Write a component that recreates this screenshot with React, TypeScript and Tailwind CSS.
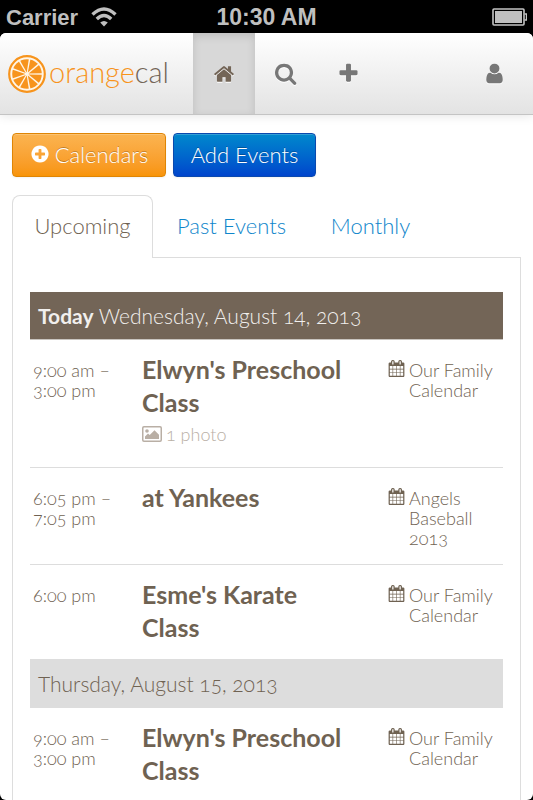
import type { ReactNode } from "react";

const PATHS = {
  home: "M1472 992v480q0 26-19 45t-45 19h-384v-384h-256v384h-384q-26 0-45-19t-19-45v-480q0-1 .5-3t.5-3l575-474 575 474q1 2 1 6zm223-69l-62 74q-8 9-21 11h-3q-13 0-21-7l-692-577-692 577q-12 8-24 7-13-2-21-11l-62-74q-8-10-7-23.5t11-21.5l719-599q32-26 76-26t76 26l244 204v-195q0-14 9-23t23-9h192q14 0 23 9t9 23v408l219 182q10 8 11 21.5t-7 23.5z",
  search: "M1152 832q0-185-131.5-316.5t-316.5-131.5-316.5 131.5-131.5 316.5 131.5 316.5 316.5 131.5 316.5-131.5 131.5-316.5zm512 832q0 52-38 90t-90 38q-54 0-90-38l-343-342q-179 124-399 124-143 0-273.5-55.5t-225-150-150-225-55.5-273.5 55.5-273.5 150-225 225-150 273.5-55.5 273.5 55.5 225 150 150 225 55.5 273.5q0 220-124 399l343 343q37 37 37 90z",
  plus: "M1600 736v192q0 40-28 68t-68 28h-416v416q0 40-28 68t-68 28h-192q-40 0-68-28t-28-68v-416h-416q-40 0-68-28t-28-68v-192q0-40 28-68t68-28h416v-416q0-40 28-68t68-28h192q40 0 68 28t28 68v416h416q40 0 68 28t28 68z",
  plusCircle: "M1344 960v-128q0-26-19-45t-45-19h-256v-256q0-26-19-45t-45-19h-128q-26 0-45 19t-19 45v256h-256q-26 0-45 19t-19 45v128q0 26 19 45t45 19h256v256q0 26 19 45t45 19h128q26 0 45-19t19-45v-256h256q26 0 45-19t19-45zm320-64q0 209-103 385.5t-279.5 279.5-385.5 103-385.5-103-279.5-279.5-103-385.5 103-385.5 279.5-279.5 385.5-103 385.5 103 279.5 279.5 103 385.5z",
  user: "M1536 1399q0 109-62.5 187t-150.5 78h-854q-88 0-150.5-78t-62.5-187q0-85 8.5-160.5t31.5-152 58.5-131 94-89 134.5-34.5q131 128 313 128t313-128q76 0 134.5 34.5t94 89 58.5 131 31.5 152 8.5 160.5zm-256-887q0 159-112.5 271.5t-271.5 112.5-271.5-112.5-112.5-271.5 112.5-271.5 271.5-112.5 271.5 112.5 112.5 271.5z",
  calendar: "M192 1664h288v-288h-288v288zm352 0h320v-288h-320v288zm-352-352h288v-320h-288v320zm352 0h320v-320h-320v320zm-352-384h288v-288h-288v288zm736 736h320v-288h-320v288zm-384-736h320v-288h-320v288zm768 736h288v-288h-288v288zm-384-352h320v-320h-320v320zm-352-864v-288q0-13-9.5-22.5t-22.5-9.5h-64q-13 0-22.5 9.5t-9.5 22.5v288q0 13 9.5 22.5t22.5 9.5h64q13 0 22.5-9.5t9.5-22.5zm736 864h288v-320h-288v320zm-384-384h320v-288h-320v288zm384 0h288v-288h-288v288zm32-480v-288q0-13-9.5-22.5t-22.5-9.5h-64q-13 0-22.5 9.5t-9.5 22.5v288q0 13 9.5 22.5t22.5 9.5h64q13 0 22.5-9.5t9.5-22.5zm384-64v1280q0 52-38 90t-90 38h-1408q-52 0-90-38t-38-90v-1280q0-52 38-90t90-38h128v-96q0-66 47-113t113-47h64q66 0 113 47t47 113v96h384v-96q0-66 47-113t113-47h64q66 0 113 47t47 113v96h128q52 0 90 38t38 90z",
};

function Icon({ name, className }: { name: keyof typeof PATHS; className: string }) {
  return (
    <svg viewBox="0 0 1792 1792" className={className} fill="currentColor" overflow="visible" aria-hidden="true">
      <path d={PATHS[name]} />
    </svg>
  );
}

function PhotoIcon() {
  return (
    <svg viewBox="0 0 20 16" className="h-4 w-5" aria-hidden="true">
      <rect x="0.75" y="0.75" width="18.5" height="14.5" rx="1.2" fill="none" stroke="currentColor" strokeWidth="1.5" />
      <circle cx="5" cy="5" r="1.8" fill="currentColor" />
      <path d="M3 13v-2.6l3-3 1.7 1.7L12.500 4.300 17 8.800V13z" fill="currentColor" />
    </svg>
  );
}

function OrangeSlice() {
  const spokes = Array.from({ length: 9 }, (_, i) => i * 40 + 10);
  return (
    <svg viewBox="0 0 38 38" className="size-[38px]" aria-hidden="true">
      <circle cx="19" cy="19" r="17.800" fill="#fff6e8" stroke="#f7941d" strokeWidth="2.2" />
      <circle cx="19" cy="19" r="14.800" fill="#f7941d" />
      {spokes.map((angle) => (
        <path key={angle} d="M18.500 19 L18.200 3.500 H19.800 L19.500 19Z" fill="#fff6e8" transform={`rotate(${angle} 19 19)`} />
      ))}
      <circle cx="19" cy="19" r="1.800" fill="#fff6e8" />
    </svg>
  );
}

function StatusBar() {
  return (
    <div className="grid h-[33px] shrink-0 grid-cols-3 items-center bg-black px-[6px] font-['Liberation_Sans',sans-serif] text-[22px] font-bold text-[#bfbfbf]">
      <div className="flex items-center gap-[13px]">
        <span>Carrier</span>
        <svg viewBox="0 0 26 20" className="h-5 w-[26px]" fill="none" stroke="currentColor" strokeWidth="3.4" aria-hidden="true">
          <path d="M1.500 7.500 Q13 -3.500 24.500 7.500" />
          <path d="M5.800 12 Q13 5 20.200 12" />
          <path d="M13 19.500 L9.200 15.600 Q13 12.400 16.800 15.600Z" fill="currentColor" stroke="none" />
        </svg>
      </div>
      <span className="text-center text-[23px]">10:30 AM</span>
      <svg viewBox="0 0 35 18" className="h-[18px] w-[35px] justify-self-end" aria-hidden="true">
        <rect x="1" y="1" width="31" height="16" rx="1" fill="none" stroke="#c4c4c4" strokeWidth="1.6" />
        <rect x="3" y="3" width="27" height="12" fill="#bfbfbf" />
        <path d="M32.500 6h2v6h-2" fill="none" stroke="#c4c4c4" strokeWidth="1.400" />
      </svg>
    </div>
  );
}

function NavLink({ label, active, children }: { label: string; active?: boolean; children: ReactNode }) {
  return (
    <a
      href="#"
      aria-label={label}
      className={
        active
          ? "flex w-[62px] items-center justify-center bg-[#d8d8d8] text-[#736557] shadow-[inset_0_3px_8px_rgba(0,0,0,0.125)]"
          : "flex w-[62px] items-center justify-center text-[#777777]"
      }
    >
      {children}
    </a>
  );
}

function Header() {
  return (
    <header className="flex h-[82px] shrink-0 border-b border-[#c4c4c4] bg-linear-to-b from-white to-[#e3e3e3] shadow-[0_1px_10px_rgba(0,0,0,0.1)]">
      <a href="#" className="flex w-[193px] items-center pl-2">
        <OrangeSlice />
        <span className="pb-1 pl-[3px] font-['Lato',sans-serif] text-[29px] font-light text-[#f7941d]">
          orange<span className="text-[#736557]">cal</span>
        </span>
      </a>
      <nav className="flex flex-1">
        <NavLink label="Home" active>
          <Icon name="home" className="size-[22px] drop-shadow-[0_1px_0_#ffffff]" />
        </NavLink>
        <NavLink label="Search">
          <Icon name="search" className="size-[23px] drop-shadow-[0_1px_0_#ffffff]" />
        </NavLink>
        <NavLink label="Add">
          <Icon name="plus" className="size-[23px] drop-shadow-[0_1px_0_#ffffff]" />
        </NavLink>
      </nav>
      <nav className="flex pr-2">
        <NavLink label="Account">
          <Icon name="user" className="size-[23px] drop-shadow-[0_1px_0_#ffffff]" />
        </NavLink>
      </nav>
    </header>
  );
}

function Tabs() {
  return (
    <div role="tablist" className="flex border-b border-[#dddddd] text-[22px] leading-5">
      <button role="tab" aria-selected="true" className="-mb-px h-[63px] w-[141px] rounded-t-lg border border-b-0 border-[#dddddd] bg-white pb-0.5">
        Upcoming
      </button>
      <button role="tab" aria-selected="false" className="w-[157px] text-[#0f86cb]">
        Past Events
      </button>
      <button role="tab" aria-selected="false" className="w-[121px] text-[#0f86cb]">
        Monthly
      </button>
    </div>
  );
}

type EventItem = { time: string[]; title: string; calendar: string; photos?: string };

const TODAY: EventItem[] = [
  { time: ["9:00 am –", "3:00 pm"], title: "Elwyn's Preschool Class", calendar: "Our Family Calendar", photos: "1 photo" },
  { time: ["6:05 pm –", "7:05 pm"], title: "at Yankees", calendar: "Angels Baseball 2013" },
  { time: ["6:00 pm"], title: "Esme's Karate Class", calendar: "Our Family Calendar" },
];

const TOMORROW: EventItem[] = [
  { time: ["9:00 am –", "3:00 pm"], title: "Elwyn's Preschool Class", calendar: "Our Family Calendar" },
];

function EventRow({ event }: { event: EventItem }) {
  return (
    <li className="grid grid-cols-[112px_1fr_115px] border-b border-[#dddddd] pt-[13px] pb-4 last:border-b-0 last:pb-[15px]">
      <div className="pt-[7px] pl-[3px] text-[18px] leading-5">
        {event.time.map((line) => (
          <div key={line}>{line}</div>
        ))}
      </div>
      <div className="pr-8">
        <h3 className="text-[25px] leading-[33px] font-bold">{event.title}</h3>
        {event.photos && (
          <a href="#" className="flex h-8 items-center gap-1 pb-0.5 text-[18px] text-[#b9afa5]">
            <PhotoIcon />
            {event.photos}
          </a>
        )}
      </div>
      <div className="flex gap-1 pt-[7px] text-[18px] leading-5">
        <Icon name="calendar" className="size-[17px] shrink-0" />
        <span className="flex-1 pr-2">{event.calendar}</span>
      </div>
    </li>
  );
}

export default function App() {
  return (
    <div className="flex h-screen flex-col overflow-hidden bg-black font-['Lato',sans-serif] font-light text-[#6f6252] oldstyle-nums">
      <StatusBar />
      <div className="flex min-h-0 flex-1 flex-col overflow-hidden rounded-md bg-white">
        <Header />
        <main className="px-3 pt-[18px]">
          <div className="flex gap-[7px] pb-[18px] text-[22px] text-white">
            <button className="flex h-11 w-[154px] items-center justify-center gap-[5px] rounded-[4px] border border-[#df8505] bg-linear-to-b from-[#fbb450] to-[#f89406] pb-0.5 shadow-[inset_0_1px_0_rgba(255,255,255,0.2),0_1px_2px_rgba(0,0,0,0.05)] text-shadow-[0_-1px_0_rgba(0,0,0,0.25)]">
              <Icon name="plusCircle" className="size-5" />
              Calendars
            </button>
            <button className="h-11 w-[143px] rounded-[4px] border border-[#0a49ae] bg-linear-to-b from-[#0088cc] to-[#0044cc] pb-0.5 shadow-[inset_0_1px_0_rgba(255,255,255,0.2),0_1px_2px_rgba(0,0,0,0.05)] text-shadow-[0_-1px_0_rgba(0,0,0,0.25)]">
              Add Events
            </button>
          </div>
          <Tabs />
          <div className="border-x border-[#dddddd] px-[17px] pt-[34px] pb-8">
            <h2 className="border-b border-[#c9c5c0] bg-[#736557] px-[8px] text-[21px] leading-[47px] text-[#f1efed]">
              <strong className="font-bold">Today</strong> Wednesday, August 14, 2013
            </h2>
            <ul>
              {TODAY.map((event) => (
                <EventRow key={event.title} event={event} />
              ))}
            </ul>
            <h2 className="bg-[#dddddd] px-[8px] text-[21px] leading-[49px]">Thursday, August 15, 2013</h2>
            <ul>
              {TOMORROW.map((event) => (
                <EventRow key={event.title} event={event} />
              ))}
            </ul>
          </div>
        </main>
      </div>
    </div>
  );
}
